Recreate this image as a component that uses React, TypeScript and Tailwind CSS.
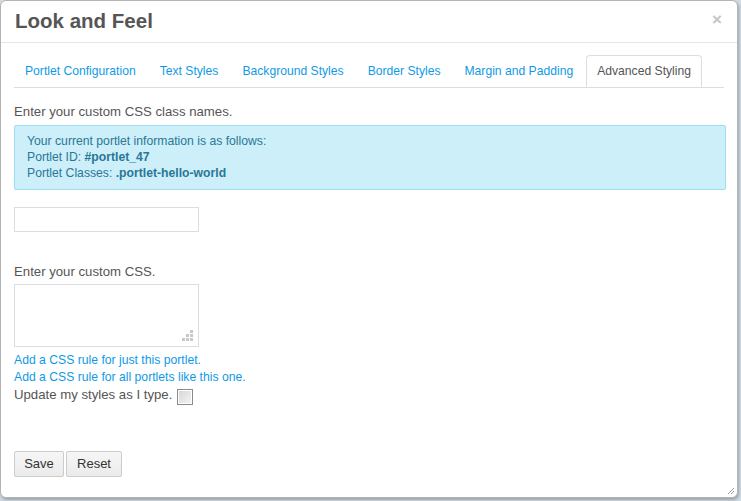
import React from "react";

const tabs = [
  "Portlet Configuration",
  "Text Styles",
  "Background Styles",
  "Border Styles",
  "Margin and Padding",
  "Advanced Styling",
];

export default function App() {
  return (
    <div
      className="w-[741px] h-[501px] bg-[#cfdbe5] overflow-hidden"
      style={{ fontFamily: '"Liberation Sans", Arial, sans-serif' }}
    >
      <div className="relative w-[738px] h-[498px] bg-white border border-[#b4b4b4] rounded-[6px] shadow-[1px_2px_3px_rgba(0,0,0,0.25)] flex flex-col">
        {/* header */}
        <div className="h-[42px] border-b border-[#e5e5e5] flex items-center pl-[14px] shrink-0">
          <h3 className="text-[20.5px] font-bold text-[#555555] leading-none">Look and Feel</h3>
          <span className="absolute right-[15px] top-[9px] text-[17px] font-bold text-[#c4c4c4] leading-[20px]">×</span>
        </div>

        {/* body */}
        <div className="px-[13px] pt-[12px] flex flex-col">
          <ul className="flex border-b border-[#dddddd] h-[33px]">
            {tabs.map((t, i) => {
              const active = i === tabs.length - 1;
              return (
                <li key={t} className="mr-[2px] mb-[-1px]">
                  <span
                    className={
                      active
                        ? "block px-[10px] py-[7px] text-[12.15px] leading-[16px] text-[#555555] bg-white border border-[#dddddd] border-b-white rounded-t-[4px]"
                        : "block px-[10px] py-[7px] text-[12.15px] leading-[16px] text-[#0f9ae6] border border-transparent"
                    }
                  >
                    {t}
                  </span>
                </li>
              );
            })}
          </ul>

          <p className="mt-[15px] text-[13.2px] leading-[18px] text-[#555555]">
            Enter your custom CSS class names.
          </p>

          <div className="mt-[4px] w-[712px] h-[65px] bg-[#cdeffa] border border-[#9ddcf2] rounded-[2px] pl-[12px] pt-[7px] text-[12.2px] leading-[16px] text-[#2a7796]">
            <div>Your current portlet information is as follows:</div>
            <div>
              Portlet ID: <strong>#portlet_47</strong>
            </div>
            <div>
              Portlet Classes: <strong>.portlet-hello-world</strong>
            </div>
          </div>

          <div className="mt-[17px] w-[185px] h-[25px] border border-[#dddddd] bg-white" />

          <p className="mt-[31px] text-[13.2px] leading-[18px] text-[#555555]">Enter your custom CSS.</p>

          <div className="relative mt-[3px] w-[185px] h-[63px] border border-[#dddddd] bg-white">
            <svg className="absolute right-[5px] bottom-[5px]" width="11" height="11" viewBox="0 0 11 11">
              <rect x="8" y="0" width="3" height="3" fill="#c8c8c8" />
              <rect x="4" y="4" width="3" height="3" fill="#c8c8c8" />
              <rect x="8" y="4" width="3" height="3" fill="#c8c8c8" />
              <rect x="0" y="8" width="3" height="3" fill="#c8c8c8" />
              <rect x="4" y="8" width="3" height="3" fill="#c8c8c8" />
              <rect x="8" y="8" width="3" height="3" fill="#c8c8c8" />
            </svg>
          </div>

          <div className="mt-[5px] flex flex-col text-[12.2px] leading-[17px] text-[#0f9ae6]">
            <span>Add a CSS rule for just this portlet.</span>
            <span>Add a CSS rule for all portlets like this one.</span>
          </div>

          <div className="flex items-center h-[18px] text-[13.2px] leading-[18px] text-[#555555]">
            <span>Update my styles as I type.</span>
            <span className="ml-[5px] mt-[4px] w-[16px] h-[16px] border border-[#8a8a8a] bg-gradient-to-br from-[#d6d6d6] to-[#f4f4f4] shadow-[inset_1px_1px_0_#ffffff,inset_-1px_-1px_0_#ffffff]" />
          </div>

          <div className="mt-[47px] flex gap-[2px]">
            <span className="w-[50px] h-[26px] flex items-center justify-center border border-[#cccccc] rounded-[2px] bg-gradient-to-b from-[#f6f6f6] to-[#ebebeb] text-[13px] text-[#333333]">
              Save
            </span>
            <span className="w-[56px] h-[26px] flex items-center justify-center border border-[#cccccc] rounded-[2px] bg-gradient-to-b from-[#f6f6f6] to-[#ebebeb] text-[13px] text-[#333333]">
              Reset
            </span>
          </div>
        </div>

        <svg className="absolute right-[2px] bottom-[2px]" width="8" height="8" viewBox="0 0 8 8">
          <line x1="1" y1="7" x2="7" y2="1" stroke="#a0a0a0" strokeWidth="1" />
          <line x1="4" y1="7" x2="7" y2="4" stroke="#a0a0a0" strokeWidth="1" />
        </svg>
      </div>
    </div>
  );
}
